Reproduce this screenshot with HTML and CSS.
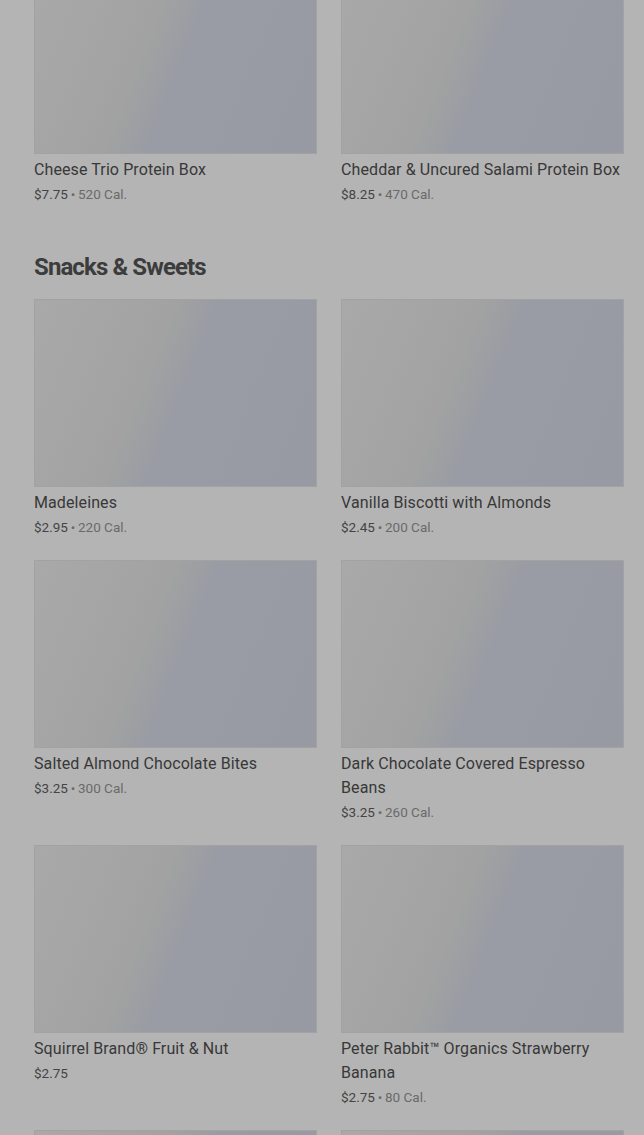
FILE: index.html
```html
<!DOCTYPE html>
<html lang="en">
<head>
    <meta charset="UTF-8">
    <meta name="viewport" content="width=device-width, initial-scale=1.0">
    <title>Menu</title>
    <link rel="stylesheet" href="styles.css">
</head>
<body>
    <main class="menu">
        <section class="menu-section">
            <div class="item-grid">
                <div class="item">
                    <div class="item-img"></div>
                    <h3>Cheese Trio Protein Box</h3>
                    <p class="meta">$7.75&thinsp;<span class="cal">•&thinsp;520 Cal.</span></p>
                </div>
                <div class="item">
                    <div class="item-img"></div>
                    <h3>Cheddar &amp; Uncured Salami Protein Box</h3>
                    <p class="meta">$8.25&thinsp;<span class="cal">•&thinsp;470 Cal.</span></p>
                </div>
            </div>
        </section>
        <section class="menu-section">
            <h2>Snacks &amp; Sweets</h2>
            <div class="item-grid">
                <div class="item">
                    <div class="item-img"></div>
                    <h3>Madeleines</h3>
                    <p class="meta">$2.95&thinsp;<span class="cal">•&thinsp;220 Cal.</span></p>
                </div>
                <div class="item">
                    <div class="item-img"></div>
                    <h3>Vanilla Biscotti with Almonds</h3>
                    <p class="meta">$2.45&thinsp;<span class="cal">•&thinsp;200 Cal.</span></p>
                </div>
                <div class="item">
                    <div class="item-img"></div>
                    <h3>Salted Almond Chocolate Bites</h3>
                    <p class="meta">$3.25&thinsp;<span class="cal">•&thinsp;300 Cal.</span></p>
                </div>
                <div class="item">
                    <div class="item-img"></div>
                    <h3>Dark Chocolate Covered Espresso Beans</h3>
                    <p class="meta">$3.25&thinsp;<span class="cal">•&thinsp;260 Cal.</span></p>
                </div>
                <div class="item">
                    <div class="item-img"></div>
                    <h3>Squirrel Brand® Fruit &amp; Nut</h3>
                    <p class="meta">$2.75</p>
                </div>
                <div class="item">
                    <div class="item-img"></div>
                    <h3>Peter Rabbit™ Organics Strawberry Banana</h3>
                    <p class="meta">$2.75&thinsp;<span class="cal">•&thinsp;80 Cal.</span></p>
                </div>
                <div class="item">
                    <div class="item-img"></div>
                </div>
                <div class="item">
                    <div class="item-img"></div>
                </div>
            </div>
        </section>
    </main>
</body>
</html>
```

FILE: styles.css
```css
body {
    margin: 0;
    padding: 0;
    background-color: #b4b4b4;
    font-family: Roboto, "Noto Sans", sans-serif;
    color: #3a3a3a;
    overflow: hidden;
}
.menu {
    margin-top: -34px;
    padding: 0 20px 0 34px;
}
.menu-section {
    padding-bottom: 45px;
}
.menu-section h2 {
    margin: 0 0 16px 0;
    font-size: 24px;
    line-height: 32px;
    font-weight: 700;
    letter-spacing: -0.9px;
    color: #3c3c3c;
}
.item-grid {
    display: grid;
    grid-template-columns: 283px 283px;
    column-gap: 24px;
    row-gap: 21px;
}
.item-img {
    height: 188px;
    background: linear-gradient(112deg, #a9a9a9 0%, #a4a4a4 30%, #a1a2a1 40%, #999ca4 52%, #979aa2 100%);
    box-shadow: inset 0 0 0 1px #a2a2a2;
    margin-bottom: 4px;
}
.item h3 {
    margin: 0;
    font-size: 16px;
    line-height: 24px;
    font-weight: 400;
    letter-spacing: 0.1px;
    color: #383838;
}
.meta {
    margin: 0;
    font-size: 13.5px;
    line-height: 24px;
    color: #444;
}
.cal {
    color: #6a6a6a;
}
```
